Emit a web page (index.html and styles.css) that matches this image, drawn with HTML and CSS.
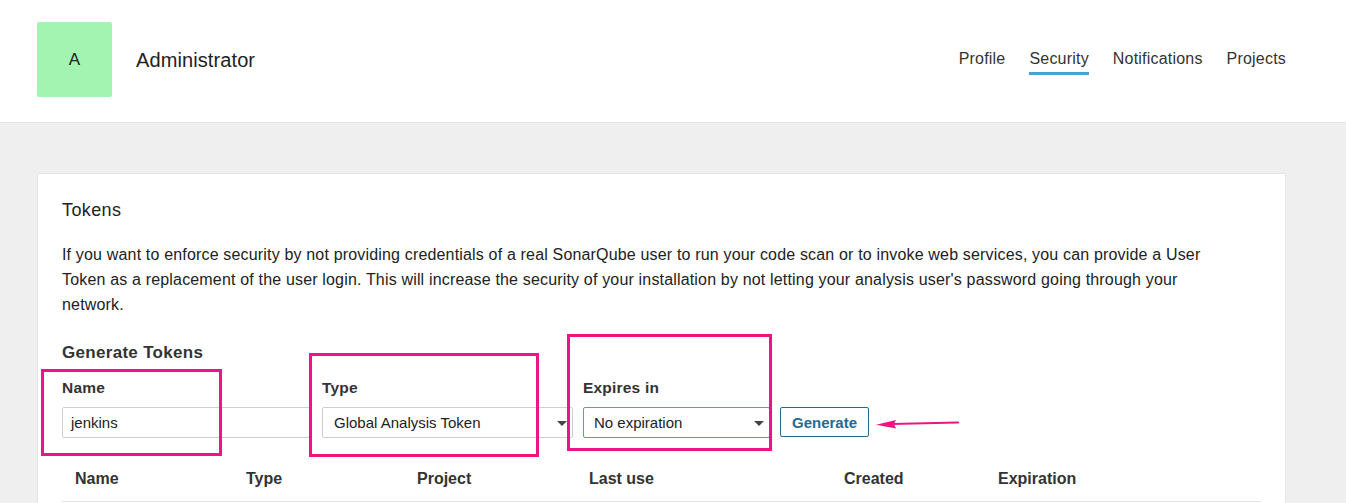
FILE: index.html
```html
<!DOCTYPE html>
<html>
<head>
<meta charset="utf-8">
<link rel="stylesheet" href="styles.css">
</head>
<body>
<header class="top">
  <div class="user">
    <div class="avatar">A</div>
    <div class="username">Administrator</div>
  </div>
  <nav class="nav">
    <a class="nav-item">Profile</a>
    <a class="nav-item active">Security</a>
    <a class="nav-item">Notifications</a>
    <a class="nav-item">Projects</a>
  </nav>
</header>
<main class="page">
  <section class="card">
    <h2 class="card-title">Tokens</h2>
    <p class="intro">If you want to enforce security by not providing credentials of a real SonarQube user to run your code scan or to invoke web services, you can provide a User<br>Token as a replacement of the user login. This will increase the security of your installation by not letting your analysis user's password going through your<br>network.</p>
    <h3 class="gen-title">Generate Tokens</h3>
    <form class="gen-form">
      <div class="field f-name">
        <label class="label">Name</label>
        <div class="input">jenkins</div>
      </div>
      <div class="field f-type">
        <label class="label">Type</label>
        <div class="select">Global Analysis Token<span class="caret"></span></div>
      </div>
      <div class="field f-exp">
        <label class="label">Expires in</label>
        <div class="select focus">No expiration<span class="caret"></span></div>
      </div>
      <div class="field f-btn">
        <button type="button" class="btn">Generate</button>
      </div>
    </form>
    <div class="table-head">
      <div class="th c1">Name</div>
      <div class="th c2">Type</div>
      <div class="th c3">Project</div>
      <div class="th c4">Last use</div>
      <div class="th c5">Created</div>
      <div class="th c6">Expiration</div>
    </div>
  </section>
</main>
<div class="mark m1"></div>
<div class="mark m2"></div>
<div class="mark m3"></div>
<svg class="arrow" width="90" height="14" viewBox="0 0 90 14">
  <path d="M84 5.5 L18 7" stroke="#ee1485" stroke-width="2.2" fill="none" stroke-linecap="round"/>
  <path d="M2 7.8 L22 3 L20 7 L22 11.5 Z" fill="#ee1485"/>
</svg>
</body>
</html>
```
FILE: styles.css
```css
* { box-sizing: border-box; }
html, body { margin: 0; padding: 0; }
body {
  font-family: "Liberation Sans", Arial, sans-serif;
  color: #333;
  background: #efefef;
  font-size: 15px;
  position: relative;
  height: 503px;
  overflow: hidden;
}
.top {
  background: #fff;
  border-bottom: 1px solid #e4e4e4;
  height: 123px;
  display: flex;
  justify-content: space-between;
  align-items: flex-start;
  padding: 22px 60px 0 37px;
}
.user { display: flex; align-items: center; }
.avatar {
  width: 75px; height: 75px;
  background: #a2f4b0;
  border-radius: 2px;
  display: flex; align-items: center; justify-content: center;
  font-size: 17px;
  color: #222;
}
.username { margin-left: 24px; font-size: 20px; color: #222; letter-spacing: 0.1px; padding-top: 2px; }
.nav { display: flex; gap: 24px; padding-top: 28px; }
.nav-item {
  font-size: 16px;
  letter-spacing: 0.2px;
  color: #333;
  padding-bottom: 4px;
  border-bottom: 3px solid transparent;
  line-height: 18px;
}
.nav-item.active { border-bottom-color: #4b9fd5; }
.page { padding: 50px 60px 0 37px; }
.card {
  background: #fff;
  border: 1px solid #e4e4e4;
  border-radius: 2px;
  padding: 25px 24px 0 24px;
  height: 400px;
}
.card-title { margin: 0; font-size: 18px; font-weight: normal; line-height: 22px; color: #222; letter-spacing: 0.4px; }
.intro { margin: 21px 0 0; line-height: 25px; font-size: 16px; letter-spacing: 0.17px; color: #222; white-space: nowrap; }
.gen-title { margin: 26px 0 0; font-size: 17px; letter-spacing: 0.3px; line-height: 20px; font-weight: bold; }
.gen-form { display: flex; align-items: flex-end; margin-top: 15px; }
.field { display: flex; flex-direction: column; }
.label { font-weight: bold; font-size: 15.5px; letter-spacing: 0.2px; line-height: 20px; margin-bottom: 9px; }
.f-name { width: 260px; }
.f-type { width: 261px; }
.f-exp { width: 197px; }
.input, .select {
  height: 31px;
  border: 1px solid #cfcfcf;
  border-radius: 2px;
  font-size: 15px;
  line-height: 29px;
  padding: 0 8px;
  position: relative;
  color: #222;
}
.f-name .input { width: 248px; }
.f-type .select { width: 251px; padding-left: 11px; }
.f-exp .select { width: 187px; padding-left: 10px; }
.select.focus { border-color: #4b9fd5; }
.caret {
  position: absolute;
  right: 5px; top: 13px;
  width: 0; height: 0;
  border-left: 5px solid transparent;
  border-right: 5px solid transparent;
  border-top: 5px solid #444;
}
.btn {
  height: 30px;
  width: 89px;
  margin-bottom: 1px;
  border: 1px solid #236a97;
  border-radius: 2px;
  background: #fff;
  color: #236a97;
  font-family: inherit;
  font-weight: bold;
  font-size: 15px;
  padding: 0;
}
.table-head {
  display: grid;
  grid-template-columns: 171px 171px 172px 255px 154px 1fr;
  margin-top: 21px;
  padding: 10px 0 12px 13px;
  border-bottom: 1px solid #e4e4e4;
}
.th { font-weight: bold; font-size: 16px; line-height: 20px; }
.mark {
  position: absolute;
  border: 3px solid #ee1485;
}
.m1 { left: 41px; top: 369px; width: 181px; height: 87px; }
.m2 { left: 309px; top: 353px; width: 230px; height: 104px; }
.m3 { left: 567px; top: 334px; width: 205px; height: 117px; }
.arrow { position: absolute; left: 874px; top: 417px; }
```
